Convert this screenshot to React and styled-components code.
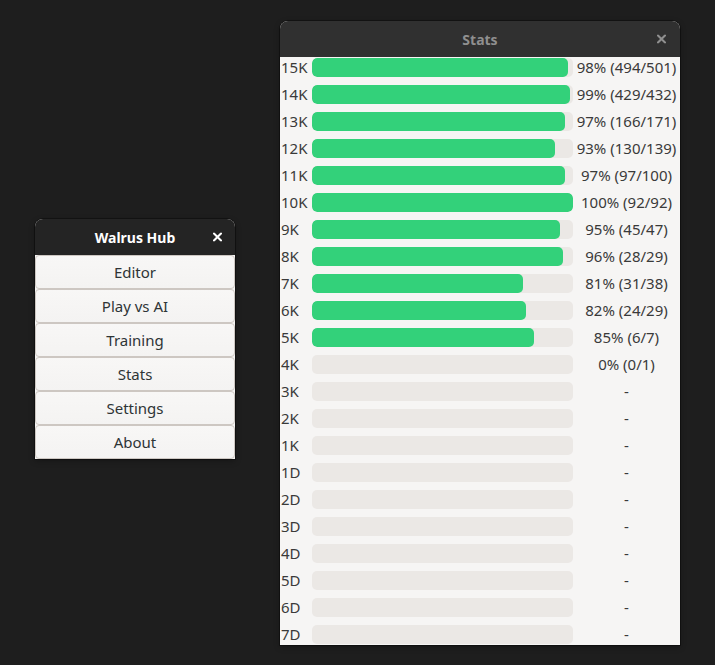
import React from 'react'
import styled, { createGlobalStyle } from 'styled-components'

const GlobalStyle = createGlobalStyle`
  html, body {
    margin: 0;
    padding: 0;
    background: #1e1e1e;
  }
  body {
    font-family: 'Noto Sans', 'DejaVu Sans', sans-serif;
  }
`

const Desktop = styled.div`
  position: relative;
  width: 715px;
  height: 665px;
  overflow: hidden;
  background: #1e1e1e;
`

const Window = styled.div`
  position: absolute;
  left: ${(p) => p.$x}px;
  top: ${(p) => p.$y}px;
  width: ${(p) => p.$w}px;
  display: flex;
  flex-direction: column;
  background: #f6f5f4;
  border-radius: 8px 8px 0 0;
  overflow: hidden;
  box-shadow: 0 0 0 1px rgba(0, 0, 0, 0.35), 0 2px 6px rgba(0, 0, 0, 0.3);
`

const TitleBar = styled.div`
  position: relative;
  height: 36px;
  flex-shrink: 0;
  display: flex;
  align-items: center;
  justify-content: center;
  background: ${(p) => (p.$focused ? '#242424' : '#303030')};
  color: ${(p) => (p.$focused ? '#ffffff' : '#8f8f8f')};
  font-size: 14px;
  font-weight: 700;
`

const CloseButton = styled.div`
  position: absolute;
  right: ${(p) => p.$right}px;
  top: 50%;
  transform: translateY(-50%);
  width: 9px;
  height: 9px;
  display: flex;
  color: ${(p) => (p.$focused ? '#ffffff' : '#8f8f8f')};
`

const Menu = styled.div`
  display: flex;
  flex-direction: column;
`

const MenuButton = styled.button`
  height: 34px;
  margin: 0;
  padding: 0;
  border: 1px solid #cdc7c2;
  border-radius: 4px;
  background: linear-gradient(#f8f7f6, #f4f3f2);
  color: #2e3436;
  font-family: 'Noto Sans', 'DejaVu Sans', sans-serif;
  font-size: 15px;
  cursor: pointer;
`

const StatsBody = styled.div`
  height: 587px;
  overflow: hidden;
  padding-top: 1px;
  display: flex;
  flex-direction: column;
  gap: 8px;
`

const Row = styled.div`
  display: flex;
  align-items: center;
  height: 19px;
  flex-shrink: 0;
  color: #3a3a3a;
  font-size: 15px;
  line-height: 17px;
`

const Label = styled.div`
  width: 32px;
  padding-left: 1px;
  box-sizing: border-box;
  white-space: nowrap;
`

const Track = styled.div`
  width: 261px;
  height: 19px;
  border-radius: 5px;
  background: #ebe8e5;
  overflow: hidden;
`

const Fill = styled.div`
  height: 100%;
  border-radius: 5px;
  background: #33d17a;
`

const Value = styled.div`
  flex: 1;
  text-align: center;
  white-space: nowrap;
`

function CloseIcon() {
  return (
    <svg width='9' height='9' viewBox='0 0 9 9'>
      <path
        d='M1 1 L8 8 M8 1 L1 8'
        stroke='currentColor'
        strokeWidth='2'
        strokeLinecap='square'
      />
    </svg>
  )
}

const stats = [
  ['15K', 98, '494/501'],
  ['14K', 99, '429/432'],
  ['13K', 97, '166/171'],
  ['12K', 93, '130/139'],
  ['11K', 97, '97/100'],
  ['10K', 100, '92/92'],
  ['9K', 95, '45/47'],
  ['8K', 96, '28/29'],
  ['7K', 81, '31/38'],
  ['6K', 82, '24/29'],
  ['5K', 85, '6/7'],
  ['4K', 0, '0/1'],
  ['3K'],
  ['2K'],
  ['1K'],
  ['1D'],
  ['2D'],
  ['3D'],
  ['4D'],
  ['5D'],
  ['6D'],
  ['7D'],
]

const menuItems = ['Editor', 'Play vs AI', 'Training', 'Stats', 'Settings', 'About']

export default function App() {
  return (
    <Desktop>
      <GlobalStyle />
      <Window $x={35} $y={219} $w={200}>
        <TitleBar $focused>
          Walrus Hub
          <CloseButton $focused $right={13}>
            <CloseIcon />
          </CloseButton>
        </TitleBar>
        <Menu>
          {menuItems.map((m) => (
            <MenuButton key={m}>{m}</MenuButton>
          ))}
        </Menu>
      </Window>

      <Window $x={280} $y={21} $w={400}>
        <TitleBar>
          Stats
          <CloseButton $right={14}>
            <CloseIcon />
          </CloseButton>
        </TitleBar>
        <StatsBody>
          {stats.map(([rank, pct, count]) => (
            <Row key={rank}>
              <Label>{rank}</Label>
              <Track>
                {pct !== undefined && <Fill style={{ width: `${pct}%` }} />}
              </Track>
              <Value>{pct !== undefined ? `${pct}% (${count})` : '-'}</Value>
            </Row>
          ))}
        </StatsBody>
      </Window>
    </Desktop>
  )
}
